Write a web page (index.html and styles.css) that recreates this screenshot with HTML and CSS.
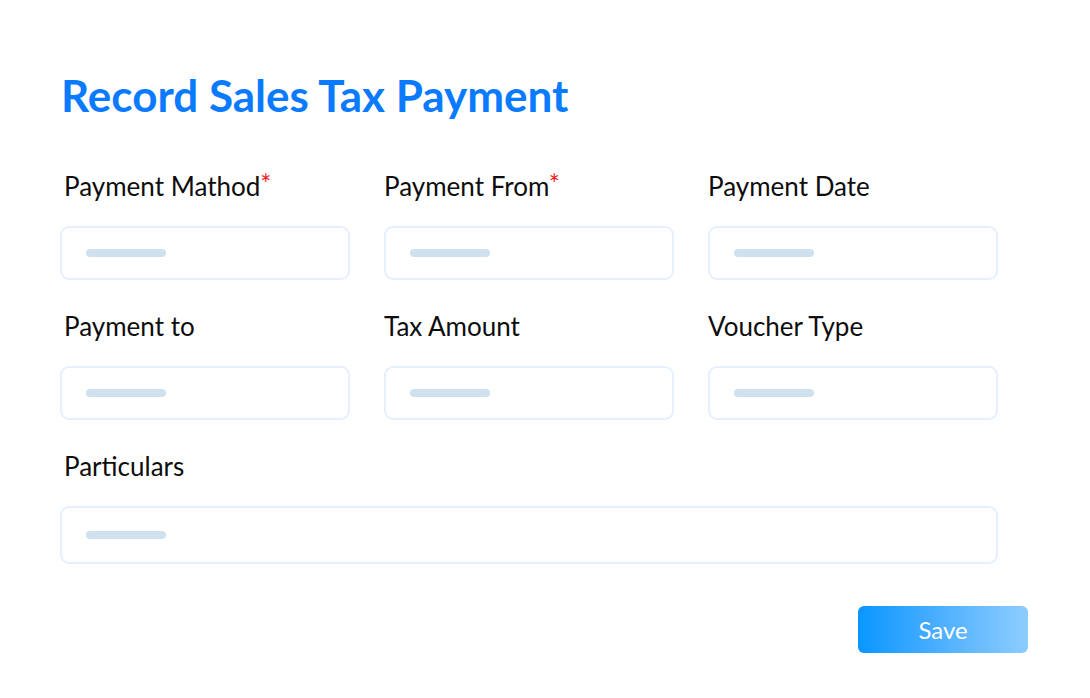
FILE: index.html
```html
<!DOCTYPE html>
<html lang="en">
<head>
<meta charset="utf-8">
<title>Record Sales Tax Payment</title>
<link rel="stylesheet" href="styles.css">
</head>
<body>
<main class="page">
  <h1 class="title">Record Sales Tax Payment</h1>
  <form class="form">
    <div class="field field-first">
      <label class="label">Payment Mathod<span class="req">*</span></label>
      <div class="input"><span class="bar"></span></div>
    </div>
    <div class="field">
      <label class="label">Payment From<span class="req">*</span></label>
      <div class="input"><span class="bar"></span></div>
    </div>
    <div class="field">
      <label class="label">Payment Date</label>
      <div class="input"><span class="bar"></span></div>
    </div>
    <div class="field field-first">
      <label class="label">Payment to</label>
      <div class="input"><span class="bar"></span></div>
    </div>
    <div class="field">
      <label class="label">Tax Amount</label>
      <div class="input"><span class="bar"></span></div>
    </div>
    <div class="field">
      <label class="label">Voucher Type</label>
      <div class="input"><span class="bar"></span></div>
    </div>
    <div class="field field-first field-wide">
      <label class="label">Particulars</label>
      <div class="input input-tall"><span class="bar"></span></div>
    </div>
  </form>
  <div class="actions">
    <button class="save" type="button">Save</button>
  </div>
</main>
</body>
</html>
```

FILE: styles.css
```css
* { box-sizing: border-box; }
html, body { margin: 0; padding: 0; background: #ffffff; }
body { font-family: Lato, "Open Sans", "Liberation Sans", sans-serif; color: #0d0d0d; }

.page {
  width: 1090px;
  height: 698px;
  padding: 69px 62px 0 60px;
}

.title {
  margin: 0;
  font-size: 44px;
  line-height: 52px;
  font-weight: 700;
  color: #0a7bff;
  padding-left: 1px;
}

.form {
  margin-top: 50px;
  display: grid;
  grid-template-columns: repeat(3, 290px);
  column-gap: 34px;
  row-gap: 31px;
}

.field { display: flex; flex-direction: column; }
.field-wide { grid-column: 1 / -1; }

.label {
  font-size: 26px;
  line-height: 30px;
  margin-bottom: 25px;
  color: #0d0d0d;
  padding-left: 0;
}
.field-first .label { padding-left: 4px; }
.req {
  color: #ee1c1c;
  font-size: 26px;
  line-height: 0;
  position: relative;
  top: -2px;
}

.input {
  height: 54px;
  border: 2px solid #e6f0fc;
  border-radius: 9px;
  display: flex;
  align-items: center;
  padding-left: 24px;
  background: #ffffff;
}
.input-tall { height: 58px; }

.bar {
  display: block;
  width: 80px;
  height: 8px;
  border-radius: 4px;
  background: #cfe1ee;
}

.actions {
  margin-top: 42px;
  display: flex;
  justify-content: flex-end;
}

.save {
  width: 170px;
  height: 47px;
  border: 0;
  border-radius: 6px;
  background: linear-gradient(90deg, #0a96ff 0%, #4fb0ff 50%, #8dcdff 100%);
  color: #ffffff;
  font-family: Lato, "Open Sans", "Liberation Sans", sans-serif;
  font-size: 24px;
  padding: 0;
  cursor: pointer;
}
```
